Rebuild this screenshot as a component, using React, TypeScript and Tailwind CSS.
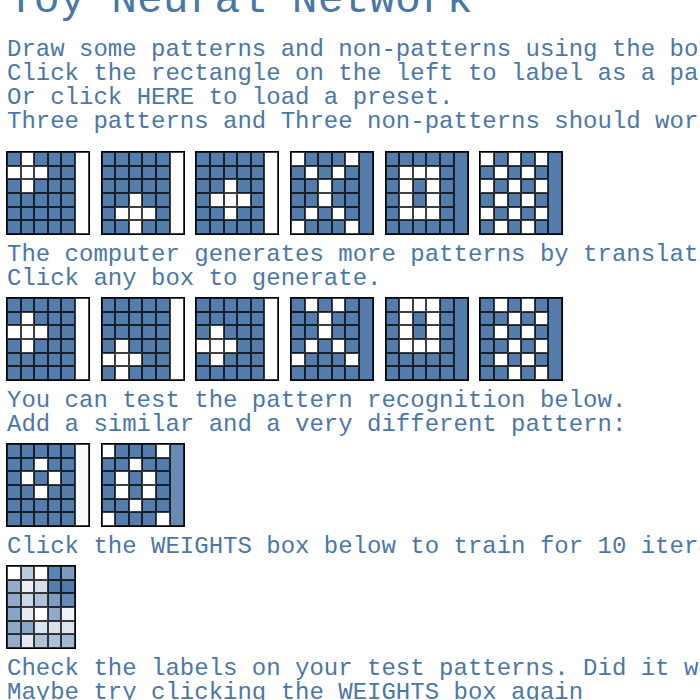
import { useState } from "react";
import type { ReactNode } from "react";

type Pattern = { rows: string[]; label: string };

const CROSS_LABEL = "bg-white";
const OTHER_LABEL = "bg-[#557dab]";

const drawn: Pattern[] = [
  { rows: [".#...", "###..", ".#...", ".....", ".....", "....."], label: CROSS_LABEL },
  { rows: [".....", ".....", ".....", "..#..", ".###.", "..#.."], label: CROSS_LABEL },
  { rows: [".....", ".....", "..#..", ".###.", "..#..", "....."], label: CROSS_LABEL },
  { rows: ["#...#", ".#.#.", "..#..", "..#..", ".#.#.", "#...#"], label: OTHER_LABEL },
  { rows: [".....", ".###.", ".#.#.", ".#.#.", ".###.", "....."], label: OTHER_LABEL },
  { rows: ["#.#.#", ".#.#.", "#.#.#", ".#.#.", "#.#.#", ".#.#."], label: OTHER_LABEL },
];

const generated: Pattern[] = [
  { rows: [".....", ".#...", "###..", ".#...", ".....", "....."], label: CROSS_LABEL },
  { rows: [".....", ".....", ".....", ".#...", "###..", ".#..."], label: CROSS_LABEL },
  { rows: [".....", ".....", ".#...", "###..", ".#...", "....."], label: CROSS_LABEL },
  { rows: [".#.#.", "..#..", "..#..", ".#.#.", "#...#", "....."], label: OTHER_LABEL },
  { rows: [".###.", ".#.#.", ".#.#.", ".###.", ".....", "....."], label: OTHER_LABEL },
  { rows: [".#.#.", "..#.#", ".#.#.", "..#.#", ".#.#.", "..#.#"], label: OTHER_LABEL },
];

const tests: Pattern[] = [
  { rows: [".....", "..#..", ".#.#.", "..#..", ".....", "....."], label: "bg-[#f8f9fb]" },
  { rows: ["#...#", "..#..", ".#.#.", ".#.#.", "..#..", "#...#"], label: "bg-[#688bb3]" },
];

const weights = [
  "bg-white", "bg-[#b9cbdf]", "bg-white", "bg-[#5b82b0]", "bg-[#7d9bc1]",
  "bg-[#93acca]", "bg-[#eceff6]", "bg-[#d5deea]", "bg-[#557dab]", "bg-[#507aaa]",
  "bg-[#91aac9]", "bg-[#cbd7e5]", "bg-[#aec1d8]", "bg-[#7f9bc0]", "bg-[#658ab5]",
  "bg-[#89a4c6]", "bg-[#e6ebf2]", "bg-white", "bg-[#91aac9]", "bg-[#eff2f8]",
  "bg-[#8fa9c9]", "bg-[#8ba6c9]", "bg-[#dbe3ee]", "bg-[#d7e0eb]", "bg-[#dde4ee]",
  "bg-[#93acca]", "bg-[#e4e9f3]", "bg-[#aec1d8]", "bg-[#acc0d8]", "bg-[#a2b7d1]",
];

const cellClass = "border border-black/75";

function PatternBox({ pattern, name }: { pattern: Pattern; name: string }) {
  const [cells, setCells] = useState(pattern.rows.join("").split(""));
  const toggle = (index: number) =>
    setCells(cells.map((c, i) => (i === index ? (c === "#" ? "." : "#") : c)));
  return (
    <div className="flex size-[84px] border border-black" role="group" aria-label={name}>
      <div className="grid w-[68px] grid-cols-5 grid-rows-6">
        {cells.map((cell, i) => (
          <button
            key={i}
            type="button"
            aria-label={`Cell ${i + 1}`}
            onClick={() => toggle(i)}
            className={`${cellClass} ${cell === "#" ? "bg-white" : "bg-[#557dab]"}`}
          />
        ))}
      </div>
      <button type="button" aria-label="Label" className={`flex-1 ${cellClass} ${pattern.label}`} />
    </div>
  );
}

function PatternRow({ patterns, name }: { patterns: Pattern[]; name: string }) {
  return (
    <div className="grid w-[568px] grid-cols-6">
      {patterns.map((pattern, i) => (
        <PatternBox key={i} pattern={pattern} name={`${name} ${i + 1}`} />
      ))}
    </div>
  );
}

function Copy({ children }: { children: ReactNode }) {
  return <div className="mt-2 mb-1.5 whitespace-nowrap pl-px text-2xl leading-6">{children}</div>;
}

export default function App() {
  return (
    <main className="h-screen overflow-hidden bg-white pl-1.5 font-['Liberation_Mono',monospace] text-[#4b77a8]">
      <header className="flex h-[30px] flex-col justify-end overflow-hidden">
        <h1 className="whitespace-nowrap pl-0.5 text-[43px] leading-[58px]">Toy Neural Network</h1>
      </header>
      <Copy>
        <p>Draw some patterns and non-patterns using the boxes below.</p>
        <p>Click the rectangle on the left to label as a pattern.</p>
        <p>
          Or click <button type="button">HERE</button> to load a preset.
        </p>
        <p>Three patterns and Three non-patterns should work.</p>
      </Copy>
      <div className="pt-[11px]">
        <PatternRow patterns={drawn} name="Pattern" />
      </div>
      <Copy>
        <p>The computer generates more patterns by translating.</p>
        <p>Click any box to generate.</p>
      </Copy>
      <PatternRow patterns={generated} name="Generated pattern" />
      <Copy>
        <p>You can test the pattern recognition below.</p>
        <p>Add a similar and a very different pattern:</p>
      </Copy>
      <PatternRow patterns={tests} name="Test pattern" />
      <Copy>
        <p>Click the WEIGHTS box below to train for 10 iterations.</p>
      </Copy>
      <button
        type="button"
        aria-label="Weights"
        className="grid h-[84px] w-[70px] grid-cols-5 grid-rows-6 border border-black"
      >
        {weights.map((color, i) => (
          <span key={i} className={`${cellClass} ${color}`} />
        ))}
      </button>
      <Copy>
        <p>Check the labels on your test patterns. Did it work?</p>
        <p>Maybe try clicking the WEIGHTS box again</p>
      </Copy>
    </main>
  );
}
